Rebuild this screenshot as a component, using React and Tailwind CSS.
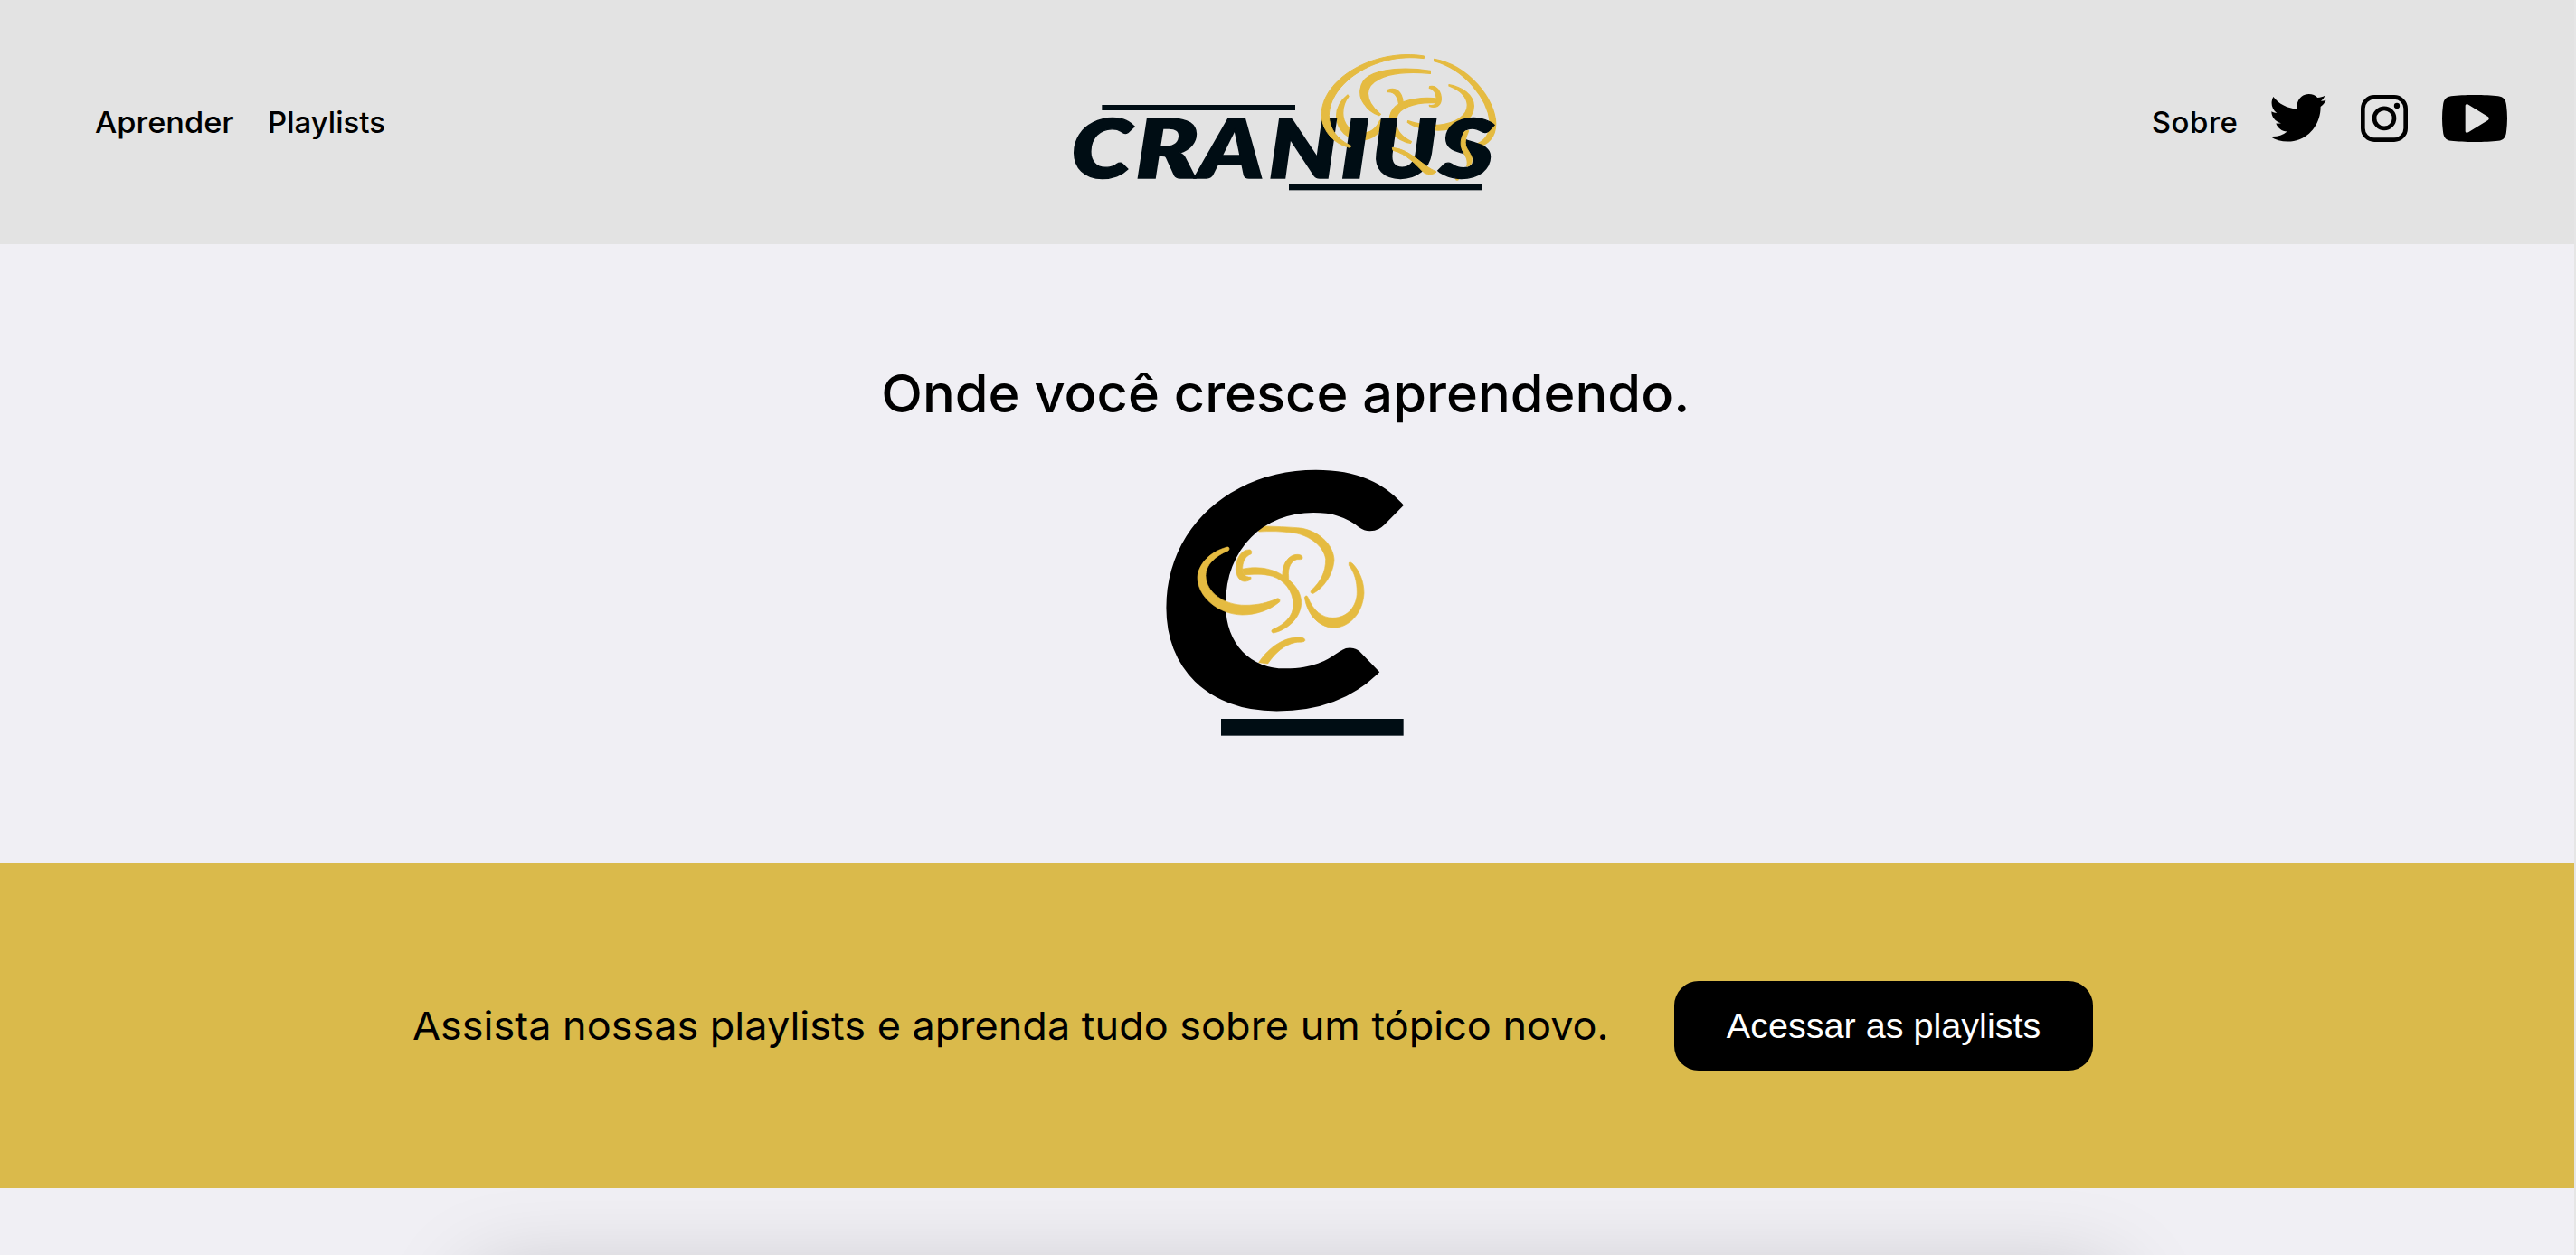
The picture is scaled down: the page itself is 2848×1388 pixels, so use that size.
const LETTERS = [
  { c: "C", x: 73, s: 1.19 },
  { c: "R", x: 286, s: 1.26 },
  { c: "A", x: 496, s: 1.2 },
  { c: "N", x: 727, s: 1.17 },
  { c: "I", x: 965, s: 1.19 },
  { c: "U", x: 1069, s: 1.14 },
  { c: "S", x: 1293, s: 1.28 },
];

function Wordmark() {
  return (
    <svg viewBox="0 0 1560 570" className="h-[190px] w-[520px]" role="img" aria-label="Cranius">
      <g fill="#e5bb41" stroke="#e5bb41" strokeWidth="4" strokeLinejoin="round">
        <path d="M990 195 C965 215 952 240 953 268 C955 312 990 345 1040 345 C1080 340 1103 315 1107 275 L1097 280 C1085 308 1062 322 1037 323 C1000 323 974 290 974 255 C974 235 981 215 993 200 Z" />
        <path d="M1264 115 C1180 102 1100 108 1060 133 C1025 155 1025 200 1045 225 C1058 245 1075 257 1094 263 L1099 259 C1075 240 1057 215 1057 190 C1057 160 1085 142 1125 130 C1165 120 1210 119 1264 124 Z" />
        <path d="M1122 179 C1150 167 1170 185 1173 218 L1160 234 C1160 205 1148 184 1124 185 Z" />
        <path d="M1293 208 C1240 201 1180 209 1150 232 C1135 245 1129 260 1128 280 C1127 315 1150 345 1198 355 L1201 350 C1170 335 1153 315 1150 290 C1148 260 1165 243 1190 234 C1220 221 1250 219 1285 221 Z" />
        <path d="M1262 167 C1285 161 1300 185 1300 210 C1298 232 1282 239 1262 233 L1261 229 C1272 231 1280 228 1283 222 C1288 200 1282 178 1261 172 Z" />
        <path d="M1326 161 C1370 169 1407 195 1408 232 C1408 280 1350 312 1290 312 C1250 311 1210 302 1189 286 L1190 281 C1225 293 1255 297 1290 295 C1350 290 1388 262 1387 228 C1385 200 1360 178 1326 165 Z" />
        <path d="M1277 76 C1390 96 1480 210 1481 290 C1481 335 1455 361 1420 367 L1418 358 C1450 345 1462 320 1462 285 C1455 210 1380 110 1277 83 Z" />
        <circle cx="1353" cy="473" r="4" />
      </g>
      <g fill="#000d14">
        <rect x="175" y="228" width="641" height="18" />
        <rect x="795" y="492" width="641" height="19" />
        {LETTERS.map((l) => (
          <text
            key={l.c}
            transform={`translate(${l.x} 471) scale(${l.s} 1)`}
            fontFamily="Lato, sans-serif"
            fontWeight="800"
            fontStyle="italic"
            fontSize="272"
            stroke="#000d14"
            strokeWidth="4"
          >
            {l.c}
          </text>
        ))}
      </g>
      <g fill="#e5bb41" stroke="#e5bb41" strokeWidth="3" strokeLinejoin="round">
        <path d="M1244 66 C1080 39 903 140 903 262 C906 320 950 360 998 370 L1001 364 C960 345 928 310 928 262 C930 160 1075 52 1243 74 Z" />
        <path d="M1138 370 C1200 375 1235 430 1284 450 C1275 461 1250 460 1240 450 C1215 425 1185 390 1140 379 Z" />
        <path d="M1378 316 C1363 340 1363 360 1370 378 C1382 400 1390 410 1385 432 C1398 432 1404 420 1401 400 C1390 375 1378 370 1381 345 C1383 330 1390 322 1391 313 Z" />
      </g>
    </svg>
  );
}

function Emblem() {
  return (
    <svg viewBox="0 0 960 990" className="h-[330px] w-[320px]" role="img" aria-label="Cranius">
      <g fill="#e5bb41" stroke="#e5bb41" strokeWidth="2" strokeLinejoin="round">
        <path d="M395 245 C440 247 500 248 540 253 C600 266 644 310 645 360 C640 410 610 450 576 469 C568 470 565 465 569 459 C600 430 617 400 617 355 C610 310 560 275 510 268 C470 262 430 262 395 264 Z" />
        <path d="M340 388 C400 375 455 390 490 420 C515 440 536 465 536 500 C535 550 490 590 444 600 C436 599 436 590 442 588 C480 572 510 545 510 505 C508 460 480 425 440 412 C410 403 375 405 347 408 Z" />
        <path d="M365 324 C340 322 319 350 319 388 C320 415 335 432 352 429 C365 427 371 422 369 415 C358 415 350 412 346 406 L341 392 C340 365 350 345 370 338 C373 330 371 325 365 324 Z" />
        <path d="M474 410 C472 370 495 340 522 340 C535 340 541 345 540 352 C538 357 530 356 522 356 C505 360 490 380 494 415 L494 425 Z" />
        <path d="M694 367 C697 364 703 367 706 370 C730 395 744 430 744 468 C740 540 690 583 643 583 C590 580 555 535 547 482 C550 475 556 476 558 482 C575 525 605 550 640 550 C690 550 721 510 721 465 C721 430 713 400 694 376 Z" />
        <path d="M395 698 C430 645 480 615 525 615 C540 614 550 618 548 626 C545 632 525 629 515 632 C480 640 450 665 425 702 Z" />
      </g>
      <text
        transform="translate(53 838) scale(1.195 1)"
        fill="#000"
        stroke="#000"
        strokeWidth="26"
        fontFamily="Lato, sans-serif"
        fontWeight="700"
        fontStyle="italic"
        fontSize="1048"
      >
        C
      </text>
      <path
        fill="#e5bb41"
        stroke="#e5bb41"
        strokeWidth="2"
        d="M288 316 C297 312 300 322 294 327 C250 345 219 375 219 410 C220 465 280 508 350 508 C390 508 425 500 455 486 C463 484 467 490 464 497 C430 525 385 540 340 540 C260 538 192 480 192 415 C195 370 235 330 288 316 Z"
      />
      <rect x="270" y="885" width="605" height="56" fill="#000d14" />
    </svg>
  );
}

function Twitter() {
  return (
    <svg viewBox="0 0 185 158" className="h-[52.6px] w-[61.6px]" aria-label="Twitter">
      <path d="M10 9 C28 33 58 48 90 50 C84 22 104 0 128 0 C140 0 150 4 157 12 C166 11 174 9 181 5 C179 13 174 19 168 23 C174 23 180 22 185 20 C180 30 175 36 167 42 C168 100 125 158 58 158 C37 158 17 152 0 141 C20 143 40 138 56 125 C38 124 25 114 19 98 C26 99 31 98 36 97 C16 92 4 76 4 58 C10 61 16 63 22 63 C4 50 0 28 10 9 Z" />
    </svg>
  );
}

function Instagram() {
  return (
    <svg viewBox="0 0 156 156" className="size-[52px]" aria-label="Instagram">
      <rect x="7" y="7" width="142" height="142" rx="38" fill="none" stroke="#000" strokeWidth="14" />
      <circle cx="78" cy="77.5" r="33" fill="none" stroke="#000" strokeWidth="14" />
      <circle cx="120" cy="36" r="9.5" />
    </svg>
  );
}

function Youtube() {
  return (
    <svg viewBox="0 0 216 156" className="h-[52px] w-[72px]" aria-label="YouTube">
      <path
        fillRule="evenodd"
        d="M30 4 C70 -1 146 -1 186 4 C204 6 211 16 213 34 C217 64 217 92 213 122 C211 140 204 150 186 152 C146 157 70 157 30 152 C12 150 5 140 3 122 C-1 92 -1 64 3 34 C5 16 12 6 30 4 Z M77 36 L77 120 C77 125 82 127 87 124 L153 83 C156 80 156 76 153 73 L87 32 C82 29 77 31 77 36 Z"
      />
    </svg>
  );
}

export default function App() {
  return (
    <div className="h-[1388px] overflow-hidden bg-[#e6e6e6] pr-0.5 font-[Inter,sans-serif] text-black">
      <div className="flex h-full flex-col bg-[#f0eff4]">
        <header className="flex h-[270px] shrink-0 items-center bg-[#e3e3e3] text-[33px] leading-10 font-medium">
          <nav className="flex w-[1160px] pl-[105px]">
            <a className="w-[191px] origin-left scale-x-[1.04]">Aprender</a>
            <a>Playlists</a>
          </nav>
          <Wordmark />
          <nav className="flex flex-1 items-center justify-end pr-[74px]">
            <a className="tracking-[0.5px]">Sobre</a>
            <div className="mb-[9px] ml-[36px] flex items-center gap-[38px]">
              <Twitter />
              <Instagram />
              <Youtube />
            </div>
          </nav>
        </header>

        <main className="flex h-[684px] shrink-0 flex-col items-center pt-[130px]">
          <h1 className="mr-[3px] scale-x-[1.027] text-[58px] leading-[70px] font-medium">Onde você cresce aprendendo.</h1>
          <div className="mt-[30px] mr-[6px]">
            <Emblem />
          </div>
        </main>

        <section className="flex h-[360px] shrink-0 items-center bg-[#daba4b] pl-[456px]">
          <div className="w-[1395px]">
            <p className="origin-left scale-x-[1.0465] text-[43px] leading-[52px] whitespace-nowrap">
              Assista nossas playlists e aprenda tudo sobre um tópico novo.
            </p>
          </div>
          <button className="h-[99px] w-[463px] rounded-[27px] bg-black font-['Liberation_Sans',sans-serif] text-[39.6px] leading-[45px] text-white">
            Acessar as playlists
          </button>
        </section>

        <section className="flex flex-1 justify-center overflow-hidden pt-[100px]">
          <div className="h-[400px] w-[1814px] shrink-0 rounded-[20px] bg-white shadow-[8px_0_100px_rgba(0,0,0,0.21)]" />
        </section>
      </div>
    </div>
  );
}
